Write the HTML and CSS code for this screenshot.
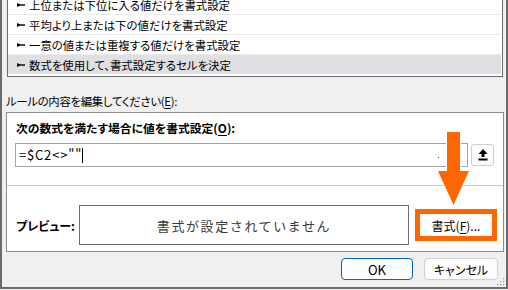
FILE: index.html
```html
<!DOCTYPE html>
<html lang="ja">
<head>
  <meta charset="UTF-8" />
  <title>新しい書式ルール</title>
  <link rel="stylesheet" href="styles.css">
</head>
<body>

  <div class="dialog">
    <div class="rule-list">
      <ul class="rules">
        <li><svg class="bullet" width="8" height="4" viewBox="0 0 8 4"><path d="M0 0 L3 1.2 L8 1.2 L8 2.8 L3 2.8 L0 4 Z"/></svg>上位または下位に入る値だけを書式設定</li>
        <li><svg class="bullet" width="8" height="4" viewBox="0 0 8 4"><path d="M0 0 L3 1.2 L8 1.2 L8 2.8 L3 2.8 L0 4 Z"/></svg>平均より上または下の値だけを書式設定</li>
        <li><svg class="bullet" width="8" height="4" viewBox="0 0 8 4"><path d="M0 0 L3 1.2 L8 1.2 L8 2.8 L3 2.8 L0 4 Z"/></svg>一意の値または重複する値だけを書式設定</li>
        <li class="selected"><svg class="bullet" width="8" height="4" viewBox="0 0 8 4"><path d="M0 0 L3 1.2 L8 1.2 L8 2.8 L3 2.8 L0 4 Z"/></svg>数式を使用して、書式設定するセルを決定</li>
      </ul>
    </div>

    <div class="edit-label">ルールの内容を編集してください(<u>E</u>):</div>

    <div class="rule-panel">
      <div class="formula-part">
        <div class="formula-title">次の数式を満たす場合に値を書式設定(<u>O</u>):</div>
        <div class="formula-row">
          <div class="formula-input">=$C2&lt;&gt;""<span class="caret"></span><span class="speck"></span></div>
          <button class="collapse-btn" aria-label="折りたたむ">
            <svg width="10" height="12" viewBox="0 0 10 12"><path d="M5 0 L9.5 5 L6.5 5 L6.5 8 L3.5 8 L3.5 5 L0.5 5 Z"/><rect x="0.5" y="9.5" width="9" height="2"/></svg>
          </button>
        </div>
      </div>
      <div class="preview-part">
        <div class="preview-label">プレビュー:</div>
        <div class="preview-box">書式が設定されていません</div>
        <div class="highlight"><button class="format-btn">書式(<u>F</u>)...</button></div>
      </div>
    </div>

    <div class="actions">
      <button class="btn ok">OK</button>
      <button class="btn">キャンセル</button>
    </div>

    <!-- callout arrow pointing at the format button -->
    <svg class="callout-arrow" width="34" height="76" viewBox="0 0 34 76">
      <polygon points="10,1 23,1 23,40 32,40 16.5,74 1,40 10,40"/>
    </svg>

    <svg class="grip" width="8" height="8" viewBox="0 0 8 8">
      <rect x="6" y="0" width="1.3" height="1.3"/>
      <rect x="3" y="3" width="1.3" height="1.3"/><rect x="6" y="3" width="1.3" height="1.3"/>
      <rect x="0" y="6" width="1.3" height="1.3"/><rect x="3" y="6" width="1.3" height="1.3"/><rect x="6" y="6" width="1.3" height="1.3"/>
    </svg>
  </div>

</body>
</html>
```

FILE: styles.css
```css
* {
  box-sizing: border-box;
}
body {
  margin: 0;
  background: #f0f0f0;
  color: #000;
  font-family: "Noto Sans CJK JP", sans-serif;
  font-size: 12px;
  font-feature-settings: "palt";
}
u {
  text-decoration-thickness: 1px;
  text-underline-offset: 2px;
}
.dialog {
  position: relative;
  width: 508px;
  height: 289px;
  border: 2px solid #6b6b6b;
  border-top: none;
  background: #f0f0f0;
  overflow: hidden;
}

/* rule type list */
.rule-list {
  height: 77px;
  margin: 0 3px 0 5px;
  border: 1px solid #6d6d6d;
  border-top: none;
  background: #fff;
  overflow: hidden;
}
.rules {
  list-style: none;
  margin: -6px 0 0;
  padding: 0;
}
.rules li {
  height: 20px;
  border-top: 1px solid #ebebeb;
  display: flex;
  align-items: center;
  gap: 4px;
  padding-left: 9px;
  margin-right: 1px;
  font-size: 11.4px;
  line-height: 16px;
  white-space: nowrap;
}
.rules li.selected {
  background: #e0dfe3;
}
.bullet {
  fill: #111;
  flex: none;
}

.edit-label {
  margin: 16px 0 0 4px;
  font-size: 11.4px;
  line-height: 16px;
  letter-spacing: -0.3px;
}

/* rule description panel */
.rule-panel {
  margin: 3px 2px 0 4px;
  border: 1px solid #8c8c8c;
  background: #fff;
}
.formula-part {
  height: 73px;
  padding: 7px 0 0 8px;
  border-bottom: 1px solid #c8c8c8;
}
.formula-title {
  padding-left: 1px;
  font-size: 11.8px;
  font-weight: bold;
  line-height: 16px;
}
.formula-row {
  display: flex;
  margin-top: 7px;
}
.formula-input {
  position: relative;
  width: 453px;
  height: 24px;
  border: 1px solid #a5a5a5;
  padding-left: 3px;
  font-size: 13px;
  line-height: 22px;
  letter-spacing: 0.8px;
}
.caret {
  display: inline-block;
  width: 1px;
  height: 15px;
  background: #000;
  vertical-align: -3px;
}
.speck {
  position: absolute;
  left: 422px;
  top: 13px;
  width: 1px;
  height: 1px;
  background: #444;
}
.collapse-btn {
  width: 23px;
  height: 22px;
  margin: 1px 0 0 3px;
  padding: 0;
  border: 1px solid #cfcfcf;
  border-radius: 3px;
  background: #fdfdfd;
  display: flex;
  align-items: center;
  justify-content: center;
}
.collapse-btn svg {
  fill: #000;
}

.preview-part {
  height: 65px;
  padding: 13px 0 0 9px;
  display: flex;
  align-items: center;
}
.preview-label {
  flex: 0 0 63px;
  font-weight: bold;
}
.preview-box {
  width: 330px;
  height: 40px;
  border: 1px solid #6f6f6f;
  display: flex;
  align-items: center;
  justify-content: center;
  font-size: 13px;
  letter-spacing: 1.6px;
  color: #3a3a3a;
  font-feature-settings: normal;
}
.highlight {
  width: 82px;
  height: 32px;
  margin-left: 6px;
  border: 5px solid #ff6600;
  background: #fff;
}
.format-btn {
  width: 100%;
  height: 100%;
  border: none;
  background: #fff;
  font: inherit;
  color: #000;
  padding: 0;
}

.actions {
  display: flex;
  justify-content: flex-end;
  gap: 11px;
  margin: 6px 8px 0 0;
}
.btn {
  width: 74px;
  height: 22px;
  border: 1px solid #d0d0d0;
  border-radius: 4px;
  background: #fdfdfd;
  font: inherit;
  color: #000;
  padding: 0;
}
.btn.ok {
  width: 72px;
  border-color: #0067c0;
  font-size: 13px;
}

.callout-arrow {
  position: absolute;
  left: 435px;
  top: 131px;
}
.callout-arrow polygon {
  fill: #ff6600;
  stroke: #fff;
  stroke-width: 2;
  paint-order: stroke;
}
.grip {
  position: absolute;
  right: 1px;
  bottom: 1px;
  fill: #9a9a9a;
}
```
